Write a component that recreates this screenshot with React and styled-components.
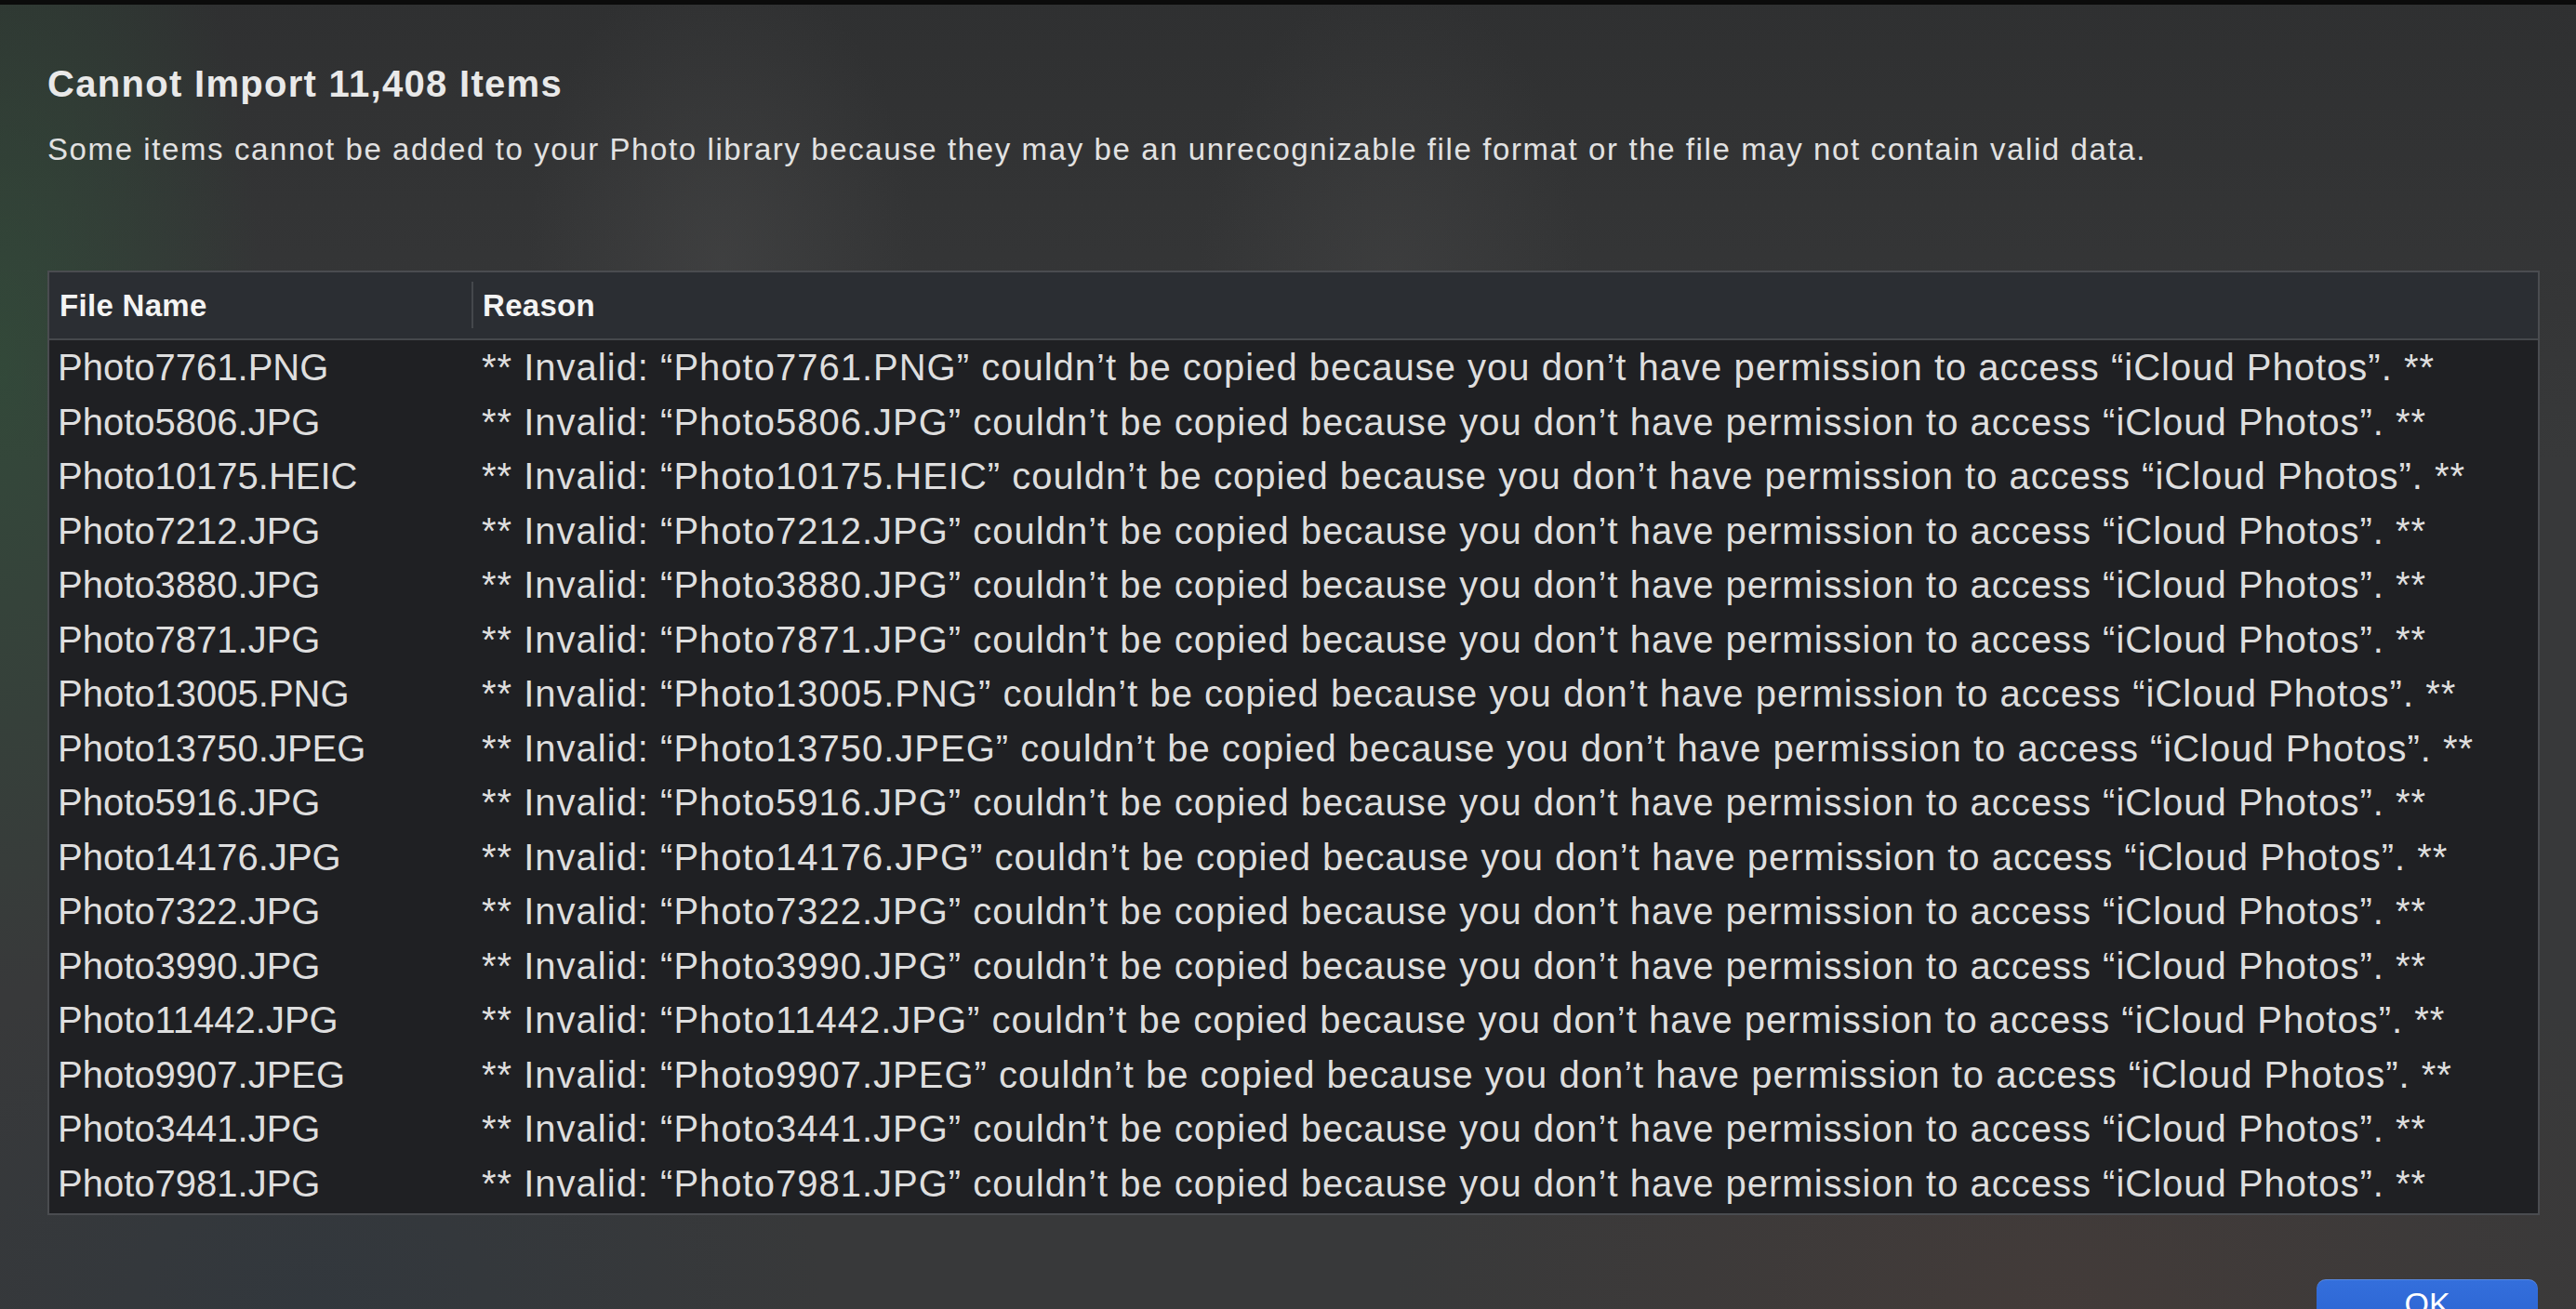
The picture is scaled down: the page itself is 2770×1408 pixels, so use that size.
import React from 'react';
import styled, { createGlobalStyle } from 'styled-components';

const GlobalStyle = createGlobalStyle`
  html, body {
    margin: 0;
    padding: 0;
    background: #363738;
    overflow: hidden;
  }
  * { box-sizing: border-box; }
`;

const Page = styled.div`
  width: 2770px;
  height: 1408px;
  overflow: hidden;
  display: flex;
  flex-direction: column;
  font-family: "Liberation Sans", Arial, sans-serif;
  background:
    radial-gradient(ellipse 380px 900px at 0% 28%, rgba(48, 84, 58, 0.6), transparent 75%),
    radial-gradient(ellipse 260px 420px at 28% 20%, rgba(90, 90, 90, 0.28), transparent 80%),
    radial-gradient(ellipse 260px 420px at 54% 22%, rgba(90, 90, 90, 0.22), transparent 80%),
    radial-gradient(ellipse 900px 600px at 80% 100%, rgba(80, 62, 56, 0.45), transparent 80%),
    radial-gradient(ellipse 700px 500px at 12% 100%, rgba(44, 54, 64, 0.5), transparent 80%),
    linear-gradient(180deg, #2f3031 0%, #38393a 35%, #38393a 100%);
`;

const TopEdge = styled.div`
  height: 5px;
  flex: none;
  background: #0b0b0b;
`;

const Dialog = styled.div`
  display: flex;
  flex-direction: column;
  padding: 65px 39px 0 51px;
`;

const Title = styled.h1`
  margin: 0;
  font-size: 40px;
  line-height: 40px;
  font-weight: 700;
  letter-spacing: 1.3px;
  color: #e9e9e9;
`;

const Message = styled.p`
  margin: 34px 0 0;
  font-size: 33px;
  line-height: 33px;
  letter-spacing: 1.6px;
  color: #e2e2e2;
`;

const Table = styled.div`
  margin-top: 114px;
  border: 2px solid #4a4c50;
  padding-bottom: 3px;
  background: #1f2023;
`;

const HeaderRow = styled.div`
  display: grid;
  grid-template-columns: 454px 1fr;
  height: 73px;
  background: #2b2e33;
  border-bottom: 2px solid #45484c;
`;

const HeaderCell = styled.div`
  position: relative;
  display: flex;
  align-items: center;
  padding-left: ${p => (p.$divider ? '12px' : '11px')};
  font-size: 33px;
  font-weight: 700;
  letter-spacing: 0.3px;
  color: #f4f4f4;

  ${p => p.$divider && `
    &::before {
      content: '';
      position: absolute;
      left: 0;
      top: 10px;
      bottom: 11px;
      width: 2px;
      background: #45484c;
    }
  `}
`;

const Row = styled.div`
  display: grid;
  grid-template-columns: 454px 1fr;
  height: 58.5px;
  align-items: center;
`;

const Cell = styled.div`
  padding-left: ${p => (p.$reason ? '11px' : '9px')};
  font-size: 40px;
  line-height: 58.5px;
  letter-spacing: ${p => (p.$reason ? '1px' : '0')};
  color: #dedede;
  white-space: nowrap;
`;

const Footer = styled.div`
  display: flex;
  justify-content: flex-end;
  margin-top: 69px;
  padding-right: 2px;
`;

const OkButton = styled.button`
  width: 238px;
  height: 52px;
  border: none;
  border-radius: 10px;
  background: linear-gradient(180deg, #346fdc 0%, #2b64d2 100%);
  box-shadow: inset 0 1px 0 rgba(255, 255, 255, 0.18);
  color: #ffffff;
  font-family: "Liberation Sans", Arial, sans-serif;
  font-size: 34px;
  line-height: 52px;
  padding: 0;
  text-align: center;
`;

const files = [
  'Photo7761.PNG',
  'Photo5806.JPG',
  'Photo10175.HEIC',
  'Photo7212.JPG',
  'Photo3880.JPG',
  'Photo7871.JPG',
  'Photo13005.PNG',
  'Photo13750.JPEG',
  'Photo5916.JPG',
  'Photo14176.JPG',
  'Photo7322.JPG',
  'Photo3990.JPG',
  'Photo11442.JPG',
  'Photo9907.JPEG',
  'Photo3441.JPG',
  'Photo7981.JPG',
];

const reasonFor = name =>
  `** Invalid: \u201C${name}\u201D couldn\u2019t be copied because you don\u2019t have permission to access \u201CiCloud Photos\u201D. **`;

const App = () => (
  <>
    <GlobalStyle />
    <Page>
      <TopEdge />
      <Dialog>
        <Title>Cannot Import 11,408 Items</Title>
        <Message>
          Some items cannot be added to your Photo library because they may be an unrecognizable file format or the file may not contain valid data.
        </Message>
        <Table>
          <HeaderRow>
            <HeaderCell>File Name</HeaderCell>
            <HeaderCell $divider>Reason</HeaderCell>
          </HeaderRow>
          {files.map(name => (
            <Row key={name}>
              <Cell>{name}</Cell>
              <Cell $reason>{reasonFor(name)}</Cell>
            </Row>
          ))}
        </Table>
        <Footer>
          <OkButton>OK</OkButton>
        </Footer>
      </Dialog>
    </Page>
  </>
);

export default App;
